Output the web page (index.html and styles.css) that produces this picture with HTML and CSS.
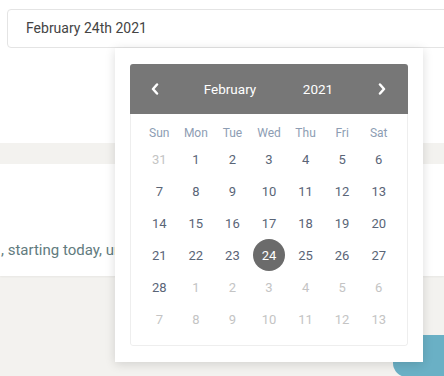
FILE: index.html
```html
<!DOCTYPE html>
<html lang="en">

<head>
    <meta charset="UTF-8">
    <meta name="viewport" content="width=device-width, initial-scale=1.0">
    <title>Pick a date</title>
    <link rel="stylesheet" href="styles.css">
</head>

<body>

    <div class="top-section">
        <div class="date-input">February 24th 2021</div>
    </div>

    <div class="band"></div>

    <div class="card">
        <p class="card-text">, starting today, until the end of the month</p>
    </div>

    <div class="bottom-section">
        <button class="action-button"></button>
    </div>

    <!-- date picker popup, floats over the page -->
    <div class="picker">
        <div class="calendar">
            <div class="calendar-header">
                <span class="nav prev">
                    <svg width="8" height="12" viewBox="0 0 8 12"><path d="M6 1.5 L2 6 L6 10.5" fill="none" stroke="#fff" stroke-width="2.5" stroke-linecap="round" stroke-linejoin="round"/></svg>
                </span>
                <span class="month">February</span>
                <span class="year">2021</span>
                <span class="nav next">
                    <svg width="8" height="12" viewBox="0 0 8 12"><path d="M2 1.5 L6 6 L2 10.5" fill="none" stroke="#fff" stroke-width="2.5" stroke-linecap="round" stroke-linejoin="round"/></svg>
                </span>
            </div>

            <div class="calendar-body">
                <div class="day-name">Sun</div>
                <div class="day-name">Mon</div>
                <div class="day-name">Tue</div>
                <div class="day-name">Wed</div>
                <div class="day-name">Thu</div>
                <div class="day-name">Fri</div>
                <div class="day-name">Sat</div>

                <div class="day other">31</div>
                <div class="day">1</div>
                <div class="day">2</div>
                <div class="day">3</div>
                <div class="day">4</div>
                <div class="day">5</div>
                <div class="day">6</div>

                <div class="day">7</div>
                <div class="day">8</div>
                <div class="day">9</div>
                <div class="day">10</div>
                <div class="day">11</div>
                <div class="day">12</div>
                <div class="day">13</div>

                <div class="day">14</div>
                <div class="day">15</div>
                <div class="day">16</div>
                <div class="day">17</div>
                <div class="day">18</div>
                <div class="day">19</div>
                <div class="day">20</div>

                <div class="day">21</div>
                <div class="day">22</div>
                <div class="day">23</div>
                <div class="day selected"><span>24</span></div>
                <div class="day">25</div>
                <div class="day">26</div>
                <div class="day">27</div>

                <div class="day">28</div>
                <div class="day other">1</div>
                <div class="day other">2</div>
                <div class="day other">3</div>
                <div class="day other">4</div>
                <div class="day other">5</div>
                <div class="day other">6</div>

                <div class="day other">7</div>
                <div class="day other">8</div>
                <div class="day other">9</div>
                <div class="day other">10</div>
                <div class="day other">11</div>
                <div class="day other">12</div>
                <div class="day other">13</div>
            </div>
        </div>
    </div>

</body>

</html>
```

FILE: styles.css
```css
body,
html {
    margin: 0;
    padding: 0;
    height: 100%;
    font-family: Roboto, "Liberation Sans", sans-serif;
    background-color: #f3f2ef;
    overflow: hidden;
    position: relative;
}

.top-section {
    background-color: #fff;
    height: 143px;
    padding: 9px 0 0 7px;
    box-sizing: border-box;
}

.date-input {
    width: 460px;
    height: 39px;
    box-sizing: border-box;
    border: 1px solid #e4e4e4;
    border-radius: 4px;
    padding-left: 18px;
    line-height: 37px;
    font-size: 14px;
    color: #444;
}

.band {
    height: 21px;
}

.card {
    background-color: #fff;
    height: 112px;
    padding-top: 76px;
    box-sizing: border-box;
    box-shadow: 0 1px 2px rgba(0, 0, 0, 0.05);
}

.card-text {
    margin: 0;
    width: 114px; /* the rest sits under the popup */
    overflow: hidden;
    padding-left: 1px;
    font-size: 15px;
    line-height: 20px;
    color: #627b7e;
    white-space: nowrap;
}

.bottom-section {
    display: flex;
    justify-content: flex-end;
    padding-top: 59px;
}

.action-button {
    width: 70px;
    height: 42px;
    margin-right: -19px;
    border: none;
    border-radius: 14px;
    background-color: #6ab0c5;
}

/* popup */
.picker {
    position: absolute;
    top: 48px;
    left: 115px;
    width: 308px;
    padding: 16px 15px;
    box-sizing: border-box;
    background-color: #fff;
    box-shadow: 0 2px 10px rgba(0, 0, 0, 0.14);
}

.calendar {
    border-radius: 3px;
    overflow: hidden;
}

.calendar-header {
    display: flex;
    align-items: center;
    height: 50px;
    background-color: #777;
    color: #fff;
    font-size: 13.5px;
    font-weight: 400;
}

.nav {
    display: flex;
    justify-content: center;
    align-items: center;
}

.nav.prev {
    width: 50px;
}

.nav.next {
    width: 52px;
}

.month {
    width: 100px;
    text-align: center;
}

.year {
    width: 76px;
    text-align: center;
}

.calendar-body {
    display: grid;
    grid-template-columns: repeat(7, 1fr);
    grid-template-rows: 20px repeat(6, 32px);
    padding: 9px 10px 10px;
    border: 1px solid #eee;
    border-top: none;
    border-radius: 0 0 3px 3px;
}

.day-name {
    display: flex;
    justify-content: center;
    align-items: center;
    font-size: 12px;
    color: #8d9db3;
}

.day {
    display: flex;
    justify-content: center;
    align-items: center;
    font-size: 13px;
    color: #5a6577;
}

.day.other {
    color: #c4c4c4;
}

.day.selected span {
    width: 32px;
    height: 32px;
    border-radius: 50%;
    background-color: #6b6b6b;
    color: #fff;
    display: flex;
    justify-content: center;
    align-items: center;
}
```
